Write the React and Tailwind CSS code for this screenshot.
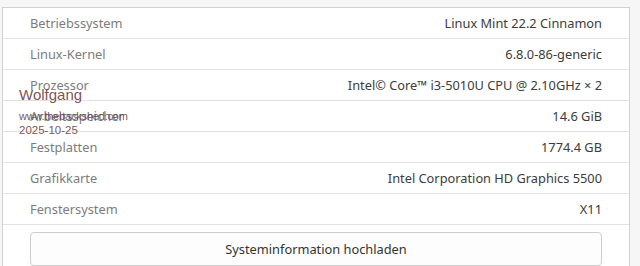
const rows = [
  ["Betriebssystem", "Linux Mint 22.2 Cinnamon"],
  ["Linux-Kernel", "6.8.0-86-generic"],
  ["Prozessor", "Intel© Core™ i3-5010U CPU @ 2.10GHz × 2"],
  ["Arbeitsspeicher", "14.6 GiB"],
  ["Festplatten", "1774.4 GB"],
  ["Grafikkarte", "Intel Corporation HD Graphics 5500"],
  ["Fenstersystem", "X11"],
];

export default function App() {
  return (
    <div className="relative h-[266px] w-[640px] overflow-hidden bg-[#f6f6f6] pl-[2px] pt-[7px] font-['Noto_Sans',sans-serif] text-[12.8px]">
      <div className="w-[628px] border border-[#cfcfd4] bg-white">
        {rows.map(([label, value]) => (
          <div
            key={label}
            className="flex h-[31px] items-center justify-between border-b border-[#e2e2e2] px-[27px] pt-[2px]"
          >
            <span className="text-[#7c7c7c]">{label}</span>
            <span className="text-[#3c3c3c]">{value}</span>
          </div>
        ))}
        <div className="px-[27px] pt-[7px] pb-3">
          <button className="flex h-[34px] w-full items-center justify-center rounded-[4px] border border-[#cdcdcd] bg-[#fdfdfd] pt-[2px] text-[#333]">
            Systeminformation hochladen
          </button>
        </div>
      </div>

      <div className="absolute left-[19px] top-[87px] font-['Liberation_Sans',sans-serif] leading-none text-[#6b3e3e]/90">
        <p className="text-[15px]">Wolfgang</p>
        <p className="mt-[9px] text-[11px] tracking-[-0.2px]">www.thebackshed.com</p>
        <p className="mt-[3px] text-[11.5px]">2025-10-25</p>
      </div>
    </div>
  );
}
